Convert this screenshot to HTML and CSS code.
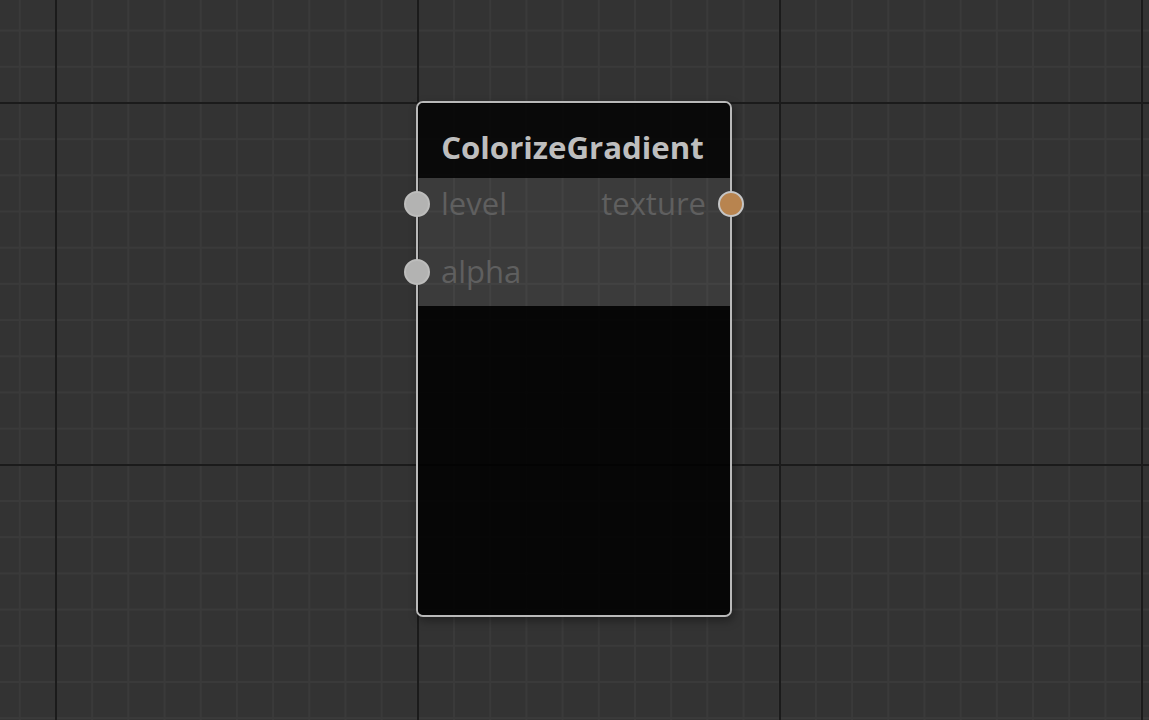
FILE: index.html
```html
<!DOCTYPE html>
<html>
<head>
<meta charset="utf-8">
<link rel="stylesheet" href="styles.css">
</head>
<body>
<div class="canvas">
  <div class="node">
    <div class="node-header">ColorizeGradient</div>
    <div class="node-ports">
      <div class="port-row">
        <span class="socket socket-in"></span>
        <span class="port-label">level</span>
        <span class="port-label port-out">texture</span>
        <span class="socket socket-out socket-texture"></span>
      </div>
      <div class="port-row">
        <span class="socket socket-in"></span>
        <span class="port-label">alpha</span>
      </div>
    </div>
    <div class="node-preview"></div>
  </div>
</div>
</body>
</html>
```

FILE: styles.css
```css
html, body {
  margin: 0;
  padding: 0;
  width: 100%;
  height: 100%;
  overflow: hidden;
}

.canvas {
  position: relative;
  width: 1149px;
  height: 720px;
  background-color: #333333;
  background-image:
    linear-gradient(to right, #1b1b1b 0, #1b1b1b 2px, transparent 2px),
    linear-gradient(to bottom, #1b1b1b 0, #1b1b1b 2px, transparent 2px),
    linear-gradient(to right, #3a3a3a 0, #3a3a3a 2px, transparent 2px),
    linear-gradient(to bottom, #3a3a3a 0, #3a3a3a 2px, transparent 2px);
  background-size: 362px 362px, 362px 362px, 36.2px 36.2px, 36.2px 36.2px;
  background-position: 55px 0, 0 102px, 18.8px 0, 0 29.6px;
  font-family: "Open Sans", "Noto Sans", sans-serif;
}

.node {
  position: absolute;
  left: 416px;
  top: 101px;
  width: 312px;
  height: 512px;
  border: 2px solid #b9b9b9;
  border-radius: 7px;
  display: flex;
  flex-direction: column;
  box-shadow: 2px 4px 10px rgba(0, 0, 0, 0.35);
}

.node-header {
  height: 75px;
  background: rgba(0, 0, 0, 0.82);
  border-radius: 5px 5px 0 0;
  color: #bebebe;
  font-weight: 700;
  font-size: 31.2px;
  display: flex;
  align-items: center;
  justify-content: center;
  padding-top: 12px;
  padding-right: 3px;
  box-sizing: border-box;
  letter-spacing: 0;
}

.node-ports {
  background: rgba(255, 255, 255, 0.045);
  display: flex;
  flex-direction: column;
  gap: 16px;
  padding-bottom: 8px;
}

.port-row {
  position: relative;
  height: 52px;
  display: flex;
  align-items: center;
  padding: 0 24px 0 23px;
}

.port-label {
  color: #5f5f5f;
  font-size: 31px;
  line-height: 1;
  padding-bottom: 2px;
}

.port-out {
  margin-left: auto;
}

.socket {
  position: absolute;
  top: 13px;
  width: 22px;
  height: 22px;
  border-radius: 50%;
  background: #b3b3b2;
  border: 2px solid #bdbdbc;
}

.socket-in {
  left: -14px;
}

.socket-out {
  right: -14px;
}

.socket-texture {
  background: #b8844f;
  border-color: #c6c6c6;
}

.node-preview {
  flex: 1;
  background: rgba(0, 0, 0, 0.88);
  border-radius: 0 0 5px 5px;
}
```
